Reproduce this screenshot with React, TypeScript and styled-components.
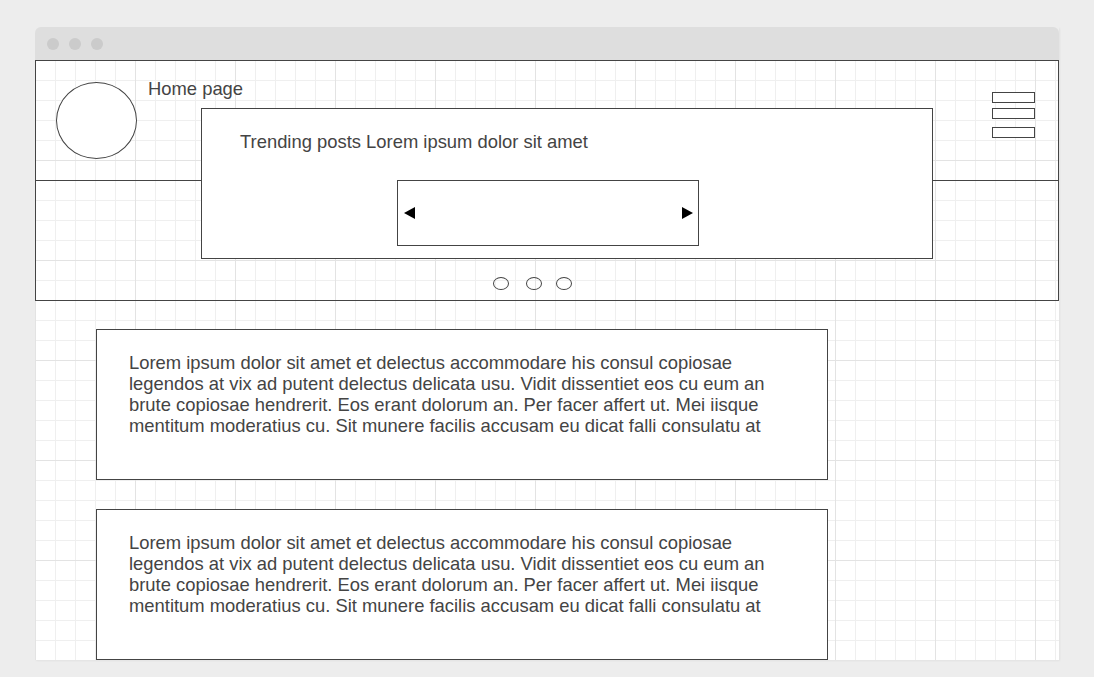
import React from "react";
import styled, { createGlobalStyle } from "styled-components";

const Global = createGlobalStyle`
  html, body { margin: 0; padding: 0; background: #ededed; }
  body { font-family: "Liberation Sans", Arial, sans-serif; color: #444; }
  * { box-sizing: border-box; }
`;

const Page = styled.div`
  padding: 27px 35px 0 35px;
  width: 1094px;
  height: 677px;
  overflow: hidden;
`;

const Window = styled.div`
  width: 1024px;
  display: flex;
  flex-direction: column;
  box-shadow: 1px 1px 2px rgba(0, 0, 0, 0.05);
`;

const TitleBar = styled.div`
  height: 33px;
  background: #dedede;
  border-radius: 6px 6px 0 0;
  display: flex;
  align-items: center;
  gap: 10px;
  padding-left: 12px;
`;

const Light = styled.span`
  width: 12px;
  height: 12px;
  border-radius: 50%;
  background: #cbcbcb;
`;

const Canvas = styled.div`
  height: 600px;
  overflow: hidden;
  background-color: #fff;
  background-image:
    linear-gradient(to right, #e3e3e3 1px, transparent 1px),
    linear-gradient(to bottom, #e3e3e3 1px, transparent 1px),
    linear-gradient(to right, #efefef 1px, transparent 1px),
    linear-gradient(to bottom, #efefef 1px, transparent 1px);
  background-size: 100px 100px, 100px 100px, 20px 20px, 20px 20px;
  background-position: 0 0;
`;

const Header = styled.header`
  position: relative;
  height: 241px;
  border: 1px solid #444;
  display: flex;
  flex-direction: column;
`;

const TopRow = styled.div`
  height: 120px;
  border-bottom: 1px solid #444;
  display: flex;
  align-items: flex-start;
`;

const Avatar = styled.div`
  width: 81px;
  height: 77px;
  margin: 21px 0 0 20px;
  border: 1px solid #444;
  border-radius: 50%;
  background: #fff;
`;

const PageTitle = styled.div`
  margin: 17px 0 0 11px;
  font-size: 18.4px;
  line-height: 21px;
`;

const Hamburger = styled.div`
  margin: 31px 23px 0 auto;
  display: flex;
  flex-direction: column;
`;

const Bar = styled.span<{ $mt: number }>`
  display: block;
  width: 43px;
  height: 11px;
  margin-top: ${(p) => p.$mt}px;
  border: 1.5px solid #444;
  background: #fff;
`;

const BottomRow = styled.div`
  flex: 1;
  display: flex;
  justify-content: center;
  align-items: flex-end;
  padding: 0 30px 10px 0;
`;

const Dot = styled.span<{ $ml: number }>`
  width: 16px;
  height: 13px;
  margin-left: ${(p) => p.$ml}px;
  border: 1px solid #444;
  border-radius: 50%;
`;

const Trending = styled.section`
  position: absolute;
  left: 165px;
  top: 47px;
  width: 732px;
  height: 151px;
  border: 1px solid #444;
  background: #fff;
  display: flex;
  flex-direction: column;
  padding-top: 22px;
`;

const TrendingText = styled.div`
  padding-left: 38px;
  font-size: 18.4px;
  line-height: 21px;
`;

const Carousel = styled.div`
  width: 302px;
  height: 66px;
  margin: 28px 0 0 195px;
  border: 1px solid #444;
  display: flex;
  align-items: center;
  justify-content: space-between;
  padding: 0 5px 0 6px;
`;

const Content = styled.main`
  display: flex;
  flex-direction: column;
  gap: 29px;
  padding: 28px 0 0 61px;
`;

const Card = styled.article`
  width: 732px;
  height: 151px;
  flex-shrink: 0;
  border: 1px solid #444;
  background: #fff;
  padding: 22px 40px 0 32px;
  font-size: 18.4px;
  line-height: 21px;
`;

const Arrow = ({ dir }: { dir: "left" | "right" }) => (
  <svg width="11" height="12" viewBox="0 0 11 12">
    {dir === "left" ? (
      <polygon points="0,6 11,0 11,12" fill="#000" />
    ) : (
      <polygon points="11,6 0,0 0,12" fill="#000" />
    )}
  </svg>
);

const lorem =
  "Lorem ipsum dolor sit amet et delectus accommodare his consul copiosae legendos at vix ad putent delectus delicata usu. Vidit dissentiet eos cu eum an brute copiosae hendrerit. Eos erant dolorum an. Per facer affert ut. Mei iisque mentitum moderatius cu. Sit munere facilis accusam eu dicat falli consulatu at";

export default function App() {
  return (
    <>
      <Global />
      <Page>
        <Window>
          <TitleBar>
            <Light />
            <Light />
            <Light />
          </TitleBar>
          <Canvas>
            <Header>
              <TopRow>
                <Avatar />
                <PageTitle>Home page</PageTitle>
                <Hamburger>
                  <Bar $mt={0} />
                  <Bar $mt={5} />
                  <Bar $mt={8} />
                </Hamburger>
              </TopRow>
              <BottomRow>
                <Dot $ml={0} />
                <Dot $ml={17} />
                <Dot $ml={14} />
              </BottomRow>
              <Trending>
                <TrendingText>Trending posts Lorem ipsum dolor sit amet</TrendingText>
                <Carousel>
                  <Arrow dir="left" />
                  <Arrow dir="right" />
                </Carousel>
              </Trending>
            </Header>
            <Content>
              <Card>{lorem}</Card>
              <Card>{lorem}</Card>
            </Content>
          </Canvas>
        </Window>
      </Page>
    </>
  );
}
